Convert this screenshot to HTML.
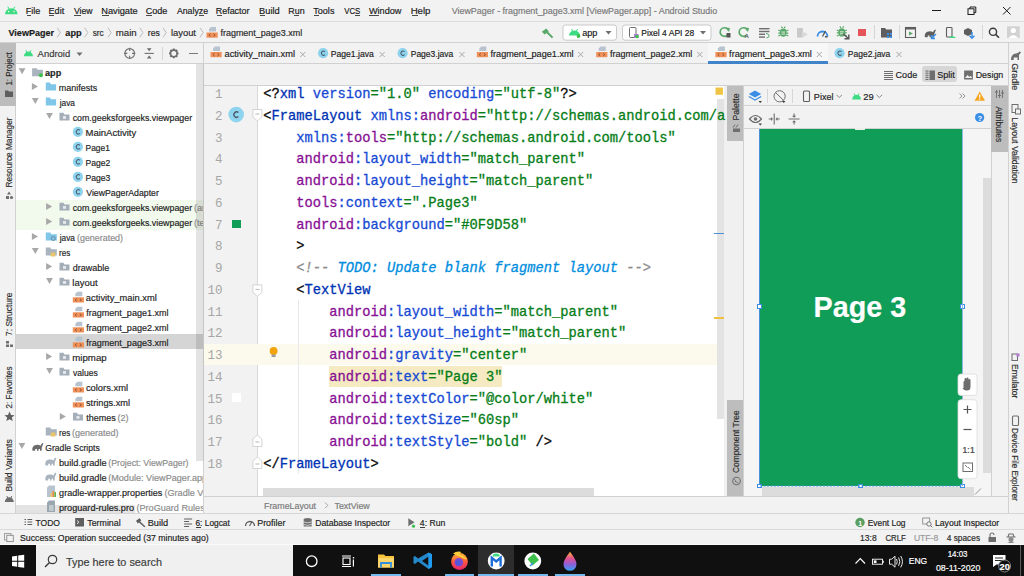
<!DOCTYPE html>
<html><head><meta charset="utf-8">
<style>
*{margin:0;padding:0;box-sizing:border-box}
html,body{width:1024px;height:576px;overflow:hidden;background:#f2f2f2;font-family:"Liberation Sans",sans-serif}
.a{position:absolute}
svg{position:absolute;left:0;top:0}
svg{font-family:"Liberation Sans",sans-serif} svg text{white-space:pre}
</style></head><body>
<div class="a" style="left:0px;top:0px;width:1024px;height:22px;background:#f2f2f2;border-bottom:1px solid #dcdcdc"></div>
<div class="a" style="left:0px;top:22px;width:1024px;height:21px;background:#f2f2f2;border-bottom:1px solid #d1d1d1"></div>
<div class="a" style="left:0px;top:43px;width:16px;height:471px;background:#f2f2f2;border-right:1px solid #d1d1d1"></div>
<div class="a" style="left:0px;top:43px;width:16px;height:63px;background:#bdbdbd;"></div>
<div class="a" style="left:0px;top:399px;width:16px;height:0px;background:#bdbdbd;"></div>
<div class="a" style="left:16px;top:43px;width:187px;height:21px;background:#f2f2f2;border-bottom:1px solid #d1d1d1"></div>
<div class="a" style="left:16px;top:64px;width:187px;height:450px;background:#ffffff;"></div>
<div class="a" style="left:16px;top:199.5px;width:187px;height:30px;background:#f2f9ed;"></div>
<div class="a" style="left:16px;top:334px;width:187px;height:15px;background:#d5d5d5;"></div>
<div class="a" style="left:16px;top:505px;width:119px;height:8px;background:#e3e3e3;"></div>
<div class="a" style="left:203px;top:43px;width:1px;height:471px;background:#d1d1d1;"></div>
<div class="a" style="left:204px;top:43px;width:804px;height:21px;background:#f2f2f2;border-bottom:1px solid #d1d1d1"></div>
<div class="a" style="left:708px;top:43px;width:120px;height:20px;background:#f7f7f7;"></div>
<div class="a" style="left:708px;top:61px;width:120px;height:3px;background:#4083c9;"></div>
<div class="a" style="left:204px;top:64px;width:804px;height:22px;background:#f2f2f2;border-bottom:1px solid #d1d1d1"></div>
<div class="a" style="left:922px;top:66px;width:35px;height:16px;background:#d6d6d6;border-radius:3px"></div>
<div class="a" style="left:204px;top:86px;width:53px;height:410px;background:#f2f2f2;"></div>
<div class="a" style="left:257px;top:86px;width:1px;height:410px;background:#d9d9d9;"></div>
<div class="a" style="left:258px;top:86px;width:468px;height:410px;background:#ffffff;"></div>
<div class="a" style="left:204px;top:343.5px;width:522px;height:21.75px;background:#fcfaed;"></div>
<div class="a" style="left:329px;top:365.5px;width:173px;height:21.25px;background:#f5eac1;"></div>
<div class="a" style="left:717px;top:99px;width:7px;height:320px;background:#e3e3e3;"></div>
<div class="a" style="left:263px;top:488px;width:331px;height:8px;background:#dcdcdc;"></div>
<div class="a" style="left:724px;top:86px;width:19px;height:410px;background:#f0f0f0;"></div>
<div class="a" style="left:727px;top:86px;width:16px;height:55px;background:#bdbdbd;"></div>
<div class="a" style="left:727px;top:400px;width:16px;height:96px;background:#bdbdbd;"></div>
<div class="a" style="left:743px;top:86px;width:1px;height:410px;background:#d1d1d1;"></div>
<div class="a" style="left:744px;top:86px;width:247px;height:410px;background:#f5f5f5;"></div>
<div class="a" style="left:744px;top:86px;width:247px;height:20px;background:#f2f2f2;border-bottom:1px solid #d1d1d1"></div>
<div class="a" style="left:744px;top:107px;width:247px;height:22px;background:#f2f2f2;border-bottom:1px solid #d1d1d1"></div>
<div class="a" style="left:759px;top:129px;width:203.5px;height:357px;background:#0f9d58;"></div>
<div class="a" style="left:983px;top:178px;width:8px;height:295px;background:#dcdcdc;"></div>
<div class="a" style="left:762px;top:487px;width:212px;height:9px;background:#dcdcdc;"></div>
<div class="a" style="left:991px;top:86px;width:17px;height:410px;background:#f2f2f2;border-left:1px solid #d1d1d1"></div>
<div class="a" style="left:991px;top:86px;width:17px;height:66px;background:#bdbdbd;"></div>
<div class="a" style="left:1008px;top:43px;width:16px;height:471px;background:#f2f2f2;border-left:1px solid #d1d1d1"></div>
<div class="a" style="left:204px;top:496px;width:804px;height:18px;background:#f2f2f2;border-top:1px solid #d1d1d1"></div>
<div class="a" style="left:0px;top:513px;width:1024px;height:16px;background:#f2f2f2;border-top:1px solid #d6d6d6"></div>
<div class="a" style="left:0px;top:529px;width:1024px;height:16px;background:#f2f2f2;border-top:1px solid #dadada"></div>
<div class="a" style="left:0px;top:544px;width:1024px;height:1px;background:#fafafa;"></div>
<div class="a" style="left:0px;top:545px;width:1024px;height:31px;background:#101010;"></div>
<div class="a" style="left:36px;top:545px;width:257px;height:31px;background:#f0f0f0;"></div>
<div class="a" style="left:478px;top:545px;width:36px;height:31px;background:#2d2d2d;"></div>
<div class="a" style="left:26.6px;top:14.9px;width:4.899999999999999px;height:0.9px;background:#4a4a4a;"></div>
<div class="a" style="left:49.4px;top:14.9px;width:5.100000000000001px;height:0.9px;background:#4a4a4a;"></div>
<div class="a" style="left:74px;top:14.9px;width:6.5px;height:0.9px;background:#4a4a4a;"></div>
<div class="a" style="left:102.2px;top:14.9px;width:6.799999999999997px;height:0.9px;background:#4a4a4a;"></div>
<div class="a" style="left:146.3px;top:14.9px;width:6.199999999999989px;height:0.9px;background:#4a4a4a;"></div>
<div class="a" style="left:199px;top:14.9px;width:4.5px;height:0.9px;background:#4a4a4a;"></div>
<div class="a" style="left:216.6px;top:14.9px;width:5.400000000000006px;height:0.9px;background:#4a4a4a;"></div>
<div class="a" style="left:259.9px;top:14.9px;width:5.100000000000023px;height:0.9px;background:#4a4a4a;"></div>
<div class="a" style="left:293.5px;top:14.9px;width:5.0px;height:0.9px;background:#4a4a4a;"></div>
<div class="a" style="left:313.6px;top:14.9px;width:5.399999999999977px;height:0.9px;background:#4a4a4a;"></div>
<div class="a" style="left:355px;top:14.9px;width:5px;height:0.9px;background:#4a4a4a;"></div>
<div class="a" style="left:369px;top:14.9px;width:9.5px;height:0.9px;background:#4a4a4a;"></div>
<div class="a" style="left:411.6px;top:14.9px;width:6.399999999999977px;height:0.9px;background:#4a4a4a;"></div>
<div class="a" style="left:932px;top:10px;width:9px;height:1px;background:#1b1b1b;"></div>
<div class="a" style="left:857.5px;top:29px;width:8px;height:7px;background:#e5535b;"></div>
<div class="a" style="left:873.5px;top:25px;width:1px;height:14px;background:#d6d6d6;"></div>
<div class="a" style="left:898.5px;top:25px;width:1px;height:14px;background:#d6d6d6;"></div>
<div class="a" style="left:982px;top:25px;width:1px;height:14px;background:#d6d6d6;"></div>
<div class="a" style="left:161.5px;top:47px;width:1px;height:13px;background:#d6d6d6;"></div>
<div class="a" style="left:188.7px;top:52.6px;width:9.3px;height:1.7px;background:#7a7a7a;"></div>
<div class="a" style="left:883.7px;top:70.5px;width:9.3px;height:1.1px;background:#6e6e6e;"></div>
<div class="a" style="left:883.7px;top:72.55px;width:9.3px;height:1.1px;background:#6e6e6e;"></div>
<div class="a" style="left:883.7px;top:74.6px;width:9.3px;height:1.1px;background:#6e6e6e;"></div>
<div class="a" style="left:883.7px;top:76.65px;width:9.3px;height:1.1px;background:#6e6e6e;"></div>
<div class="a" style="left:883.7px;top:78.7px;width:9.3px;height:1.1px;background:#6e6e6e;"></div>
<div class="a" style="left:232px;top:219.5px;width:8.5px;height:8.5px;background:#0f9d58;"></div>
<div class="a" style="left:232px;top:393px;width:8.5px;height:8.5px;background:#ffffff;"></div>
<div class="a" style="left:297.5px;top:300px;width:1px;height:174px;background:#e8e8e8;"></div>
<div class="a" style="left:714px;top:232.5px;width:10px;height:1.5px;background:#4a90d9;"></div>
<div class="a" style="left:714px;top:317px;width:10px;height:1.5px;background:#f0c040;"></div>
<div class="a" style="left:767.4px;top:89px;width:1px;height:14px;background:#d6d6d6;"></div>
<div class="a" style="left:791.7px;top:89px;width:1px;height:14px;background:#d6d6d6;"></div>
<div class="a" style="left:759px;top:129px;width:1px;height:357px;background:#4a90d9;"></div>
<div class="a" style="left:757px;top:304px;width:4.5px;height:4.5px;background:#ffffff;border:1px solid #3a8ee6"></div>
<div class="a" style="left:960px;top:304px;width:4.5px;height:4.5px;background:#ffffff;border:1px solid #3a8ee6"></div>
<div class="a" style="left:757px;top:483.5px;width:4.5px;height:4.5px;background:#ffffff;border:1px solid #3a8ee6"></div>
<div class="a" style="left:858px;top:483.5px;width:4.5px;height:4.5px;background:#ffffff;border:1px solid #3a8ee6"></div>
<div class="a" style="left:960px;top:483.5px;width:4.5px;height:4.5px;background:#ffffff;border:1px solid #3a8ee6"></div>
<div class="a" style="left:855px;top:128px;width:10px;height:2px;background:#e8f0e8;"></div>
<div class="a" style="left:961.6px;top:129px;width:1px;height:357px;background:#8ab8e0;"></div>
<div class="a" style="left:196px;top:526.8px;width:4.5px;height:0.9px;background:#3a3a3a;"></div>
<div class="a" style="left:420px;top:526.8px;width:4.5px;height:0.9px;background:#3a3a3a;"></div>
<div class="a" style="left:371.25px;top:574px;width:29.75px;height:2px;background:#76b9ed;"></div>
<div class="a" style="left:444.8px;top:574px;width:29.399999999999977px;height:2px;background:#76b9ed;"></div>
<div class="a" style="left:478.4px;top:574px;width:36.0px;height:2px;background:#76b9ed;"></div>
<div class="a" style="left:518.3px;top:574px;width:29.700000000000045px;height:2px;background:#76b9ed;"></div>
<div class="a" style="left:555px;top:574px;width:29.700000000000045px;height:2px;background:#76b9ed;"></div>
<div class="a" style="left:1020px;top:545px;width:1px;height:31px;background:#5a5a5a;"></div>
<svg width="1024" height="576" viewBox="0 0 1024 576">
<path d="M5.00,14.20 A6.30,5.93 0 0 1 17.60,14.20 Z" fill="#3ddc84"/>
<line x1="7.77" y1="6.60" x2="9.16" y2="9.26" stroke="#3ddc84" stroke-width="1"/>
<line x1="14.83" y1="6.60" x2="13.44" y2="9.26" stroke="#3ddc84" stroke-width="1"/>
<circle cx="8.6" cy="11.6" r="0.8" fill="#f2f2f2"/><circle cx="14" cy="11.6" r="0.8" fill="#f2f2f2"/>
<text x="25.68" y="14.4" font-size="9.06" fill="#1b1b1b" font-weight="normal" stroke="#1b1b1b" stroke-width="0.18" textLength="14.60" lengthAdjust="spacingAndGlyphs" >File</text>
<text x="48.47" y="14.4" font-size="9.15" fill="#1b1b1b" font-weight="normal" stroke="#1b1b1b" stroke-width="0.18" textLength="15.76" lengthAdjust="spacingAndGlyphs" >Edit</text>
<text x="73.90" y="14.4" font-size="8.66" fill="#1b1b1b" font-weight="normal" stroke="#1b1b1b" stroke-width="0.18" textLength="18.61" lengthAdjust="spacingAndGlyphs" >View</text>
<text x="101.26" y="14.4" font-size="9.24" fill="#1b1b1b" font-weight="normal" stroke="#1b1b1b" stroke-width="0.18" textLength="36.47" lengthAdjust="spacingAndGlyphs" >Navigate</text>
<text x="145.64" y="14.4" font-size="9.13" fill="#1b1b1b" font-weight="normal" stroke="#1b1b1b" stroke-width="0.18" textLength="21.82" lengthAdjust="spacingAndGlyphs" >Code</text>
<text x="176.90" y="14.4" font-size="8.75" fill="#1b1b1b" font-weight="normal" stroke="#1b1b1b" stroke-width="0.18" textLength="31.12" lengthAdjust="spacingAndGlyphs" >Analyze</text>
<text x="215.68" y="14.4" font-size="8.97" fill="#1b1b1b" font-weight="normal" stroke="#1b1b1b" stroke-width="0.18" textLength="33.90" lengthAdjust="spacingAndGlyphs" >Refactor</text>
<text x="259.06" y="14.4" font-size="9.28" fill="#1b1b1b" font-weight="normal" stroke="#1b1b1b" stroke-width="0.18" textLength="20.63" lengthAdjust="spacingAndGlyphs" >Build</text>
<text x="288.29" y="14.4" font-size="8.88" fill="#1b1b1b" font-weight="normal" stroke="#1b1b1b" stroke-width="0.18" textLength="16.28" lengthAdjust="spacingAndGlyphs" >Run</text>
<text x="313.32" y="14.4" font-size="9.04" fill="#1b1b1b" font-weight="normal" stroke="#1b1b1b" stroke-width="0.18" textLength="21.09" lengthAdjust="spacingAndGlyphs" >Tools</text>
<text x="344.20" y="14.4" font-size="8.20" fill="#1b1b1b" font-weight="normal" stroke="#1b1b1b" stroke-width="0.18" textLength="16.06" lengthAdjust="spacingAndGlyphs" >VCS</text>
<text x="368.90" y="14.4" font-size="9.16" fill="#1b1b1b" font-weight="normal" stroke="#1b1b1b" stroke-width="0.18" textLength="32.57" lengthAdjust="spacingAndGlyphs" >Window</text>
<text x="410.63" y="14.4" font-size="9.64" fill="#1b1b1b" font-weight="normal" stroke="#1b1b1b" stroke-width="0.18" textLength="19.82" lengthAdjust="spacingAndGlyphs" >Help</text>
<text x="451.70" y="14.4" font-size="8.92" fill="#7a7a7a" font-weight="normal" stroke="#7a7a7a" stroke-width="0.18" textLength="265.53" lengthAdjust="spacingAndGlyphs" >ViewPager - fragment_page3.xml [ViewPager.app] - Android Studio</text>
<rect x="968" y="8.8" width="6" height="5.7" fill="none" stroke="#1b1b1b" stroke-width="1"/><path d="M970,8.8 V7 H975.8 V12.6 H974" fill="none" stroke="#1b1b1b" stroke-width="1"/>
<path d="M1003,7 L1010.5,14.5 M1010.5,7 L1003,14.5" stroke="#1b1b1b" stroke-width="1"/>
<text x="8.51" y="35.6" font-size="9.02" fill="#1b1b1b" font-weight="bold" stroke="#1b1b1b" stroke-width="0.18" textLength="45.48" lengthAdjust="spacingAndGlyphs" >ViewPager</text>
<path d="M57.2,27.8 L60.400000000000006,32.55 L57.2,37.3" stroke="#b5b5b5" stroke-width="0.9" fill="none"/>
<text x="65.33" y="35.6" font-size="9.15" fill="#1b1b1b" font-weight="bold" stroke="#1b1b1b" stroke-width="0.18" textLength="16.27" lengthAdjust="spacingAndGlyphs" >app</text>
<path d="M84.6,27.8 L87.8,32.55 L84.6,37.3" stroke="#b5b5b5" stroke-width="0.9" fill="none"/>
<text x="92.75" y="35.6" font-size="8.20" fill="#2b2b2b" font-weight="normal" stroke="#2b2b2b" stroke-width="0.18" textLength="10.92" lengthAdjust="spacingAndGlyphs" >src</text>
<path d="M108,27.8 L111.2,32.55 L108,37.3" stroke="#b5b5b5" stroke-width="0.9" fill="none"/>
<text x="115.72" y="35.6" font-size="9.66" fill="#2b2b2b" font-weight="normal" stroke="#2b2b2b" stroke-width="0.18" textLength="20.93" lengthAdjust="spacingAndGlyphs" >main</text>
<path d="M139.8,27.8 L143.0,32.55 L139.8,37.3" stroke="#b5b5b5" stroke-width="0.9" fill="none"/>
<text x="147.88" y="35.6" font-size="8.69" fill="#2b2b2b" font-weight="normal" stroke="#2b2b2b" stroke-width="0.18" textLength="12.07" lengthAdjust="spacingAndGlyphs" >res</text>
<path d="M163,27.8 L166.2,32.55 L163,37.3" stroke="#b5b5b5" stroke-width="0.9" fill="none"/>
<text x="170.94" y="35.6" font-size="9.38" fill="#2b2b2b" font-weight="normal" stroke="#2b2b2b" stroke-width="0.18" textLength="25.03" lengthAdjust="spacingAndGlyphs" >layout</text>
<path d="M200,27.8 L203.2,32.55 L200,37.3" stroke="#b5b5b5" stroke-width="0.9" fill="none"/>
<path d="M209.0,31.5 L209.0,29 L211.0,27 L216.0,27 L216.0,31.5 Z" fill="#b7c3cf"/>
<rect x="206.5" y="32.5" width="11.2" height="5.2" fill="#f0915a"/>
<path d="M210.5,33.7 l-1.6,1.4 l1.6,1.4 M213.5,33.7 l1.6,1.4 l-1.6,1.4" stroke="#8a4a2a" stroke-width="0.9" fill="none"/>
<text x="220.41" y="35.6" font-size="8.98" fill="#2b2b2b" font-weight="normal" stroke="#2b2b2b" stroke-width="0.18" textLength="81.88" lengthAdjust="spacingAndGlyphs" >fragment_page3.xml</text>
<path d="M541.9,31.8 L546.2,28.6 L548.8,31.2 L544.6,34.4 Z" fill="#59a869"/><path d="M546.8,32 L552.6,37.6" stroke="#59a869" stroke-width="2"/>
<rect x="563" y="25" width="53.5" height="15.2" rx="2.5" fill="#ffffff" stroke="#c9c9c9" stroke-width="1"/>
<path d="M569.00,35.50 A5.50,5.07 0 0 1 580.00,35.50 Z" fill="#3ddc84"/>
<line x1="571.42" y1="29.00" x2="572.63" y2="31.27" stroke="#3ddc84" stroke-width="1"/>
<line x1="577.58" y1="29.00" x2="576.37" y2="31.27" stroke="#3ddc84" stroke-width="1"/>
<circle cx="578.5" cy="36" r="1.9" fill="#3ec14c"/>
<text x="582.14" y="35.6" font-size="9.12" fill="#1b1b1b" font-weight="normal" stroke="#1b1b1b" stroke-width="0.18" textLength="15.21" lengthAdjust="spacingAndGlyphs" >app</text>
<path d="M605.5,31 L611.5,31 L608.5,34.5 Z" fill="#6e6e6e"/>
<rect x="622.5" y="25" width="88.5" height="15.2" rx="2.5" fill="#ffffff" stroke="#c9c9c9" stroke-width="1"/>
<rect x="629.5" y="27.5" width="6.5" height="10" rx="1" fill="none" stroke="#6e6e6e" stroke-width="1"/>
<rect x="634" y="34" width="4.5" height="4" fill="#b07ad6"/><circle cx="637" cy="36.5" r="1.8" fill="#3ec14c"/>
<text x="641.22" y="35.6" font-size="8.52" fill="#1b1b1b" font-weight="normal" stroke="#1b1b1b" stroke-width="0.18" textLength="53.07" lengthAdjust="spacingAndGlyphs" >Pixel 4 API 28</text>
<path d="M700,31 L706,31 L703,34.5 Z" fill="#6e6e6e"/>
<path d="M728.5,30.5 A4.3,4.3 0 1 0 727.0,35.5" stroke="#59a869" stroke-width="1.6" fill="none"/><path d="M725.5,27.5 L730.0,28.0 L729.0,32.0 Z" fill="#59a869"/>
<rect x="726.5" y="33" width="4" height="4.5" fill="#555"/>
<path d="M747.5,30.5 A4.3,4.3 0 1 0 746.0,35.5" stroke="#59a869" stroke-width="1.6" fill="none"/><path d="M744.5,27.5 L749.0,28.0 L748.0,32.0 Z" fill="#59a869"/>
<text x="744.5" y="37.5" font-size="6" fill="#555" font-weight="bold">A</text>
<rect x="759" y="28" width="10.5" height="1.4" fill="#6e6e6e"/><rect x="759" y="30.8" width="10.5" height="1.4" fill="#6e6e6e"/><rect x="759" y="33.6" width="6" height="1.4" fill="#6e6e6e"/><rect x="759" y="36.4" width="6" height="1.4" fill="#6e6e6e"/><path d="M766,33.5 q3,0 3,2.3 q0,2 -2.5,2" stroke="#59a869" stroke-width="1" fill="none"/>
<ellipse cx="783.3" cy="32.6" rx="3.4" ry="4.2" fill="#59a869"/><path d="M778.3,30.1 l2,1 M788.3,30.1 l-2,1 M778.3,33.1 h2 M788.3,33.1 h-2 M778.3,36.1 l2,-1 M788.3,36.1 l-2,-1 M781.3,26.6 l1.2,1.5 M785.3,26.6 l-1.2,1.5" stroke="#59a869" stroke-width="1.1"/><rect x="781.5" y="31.6" width="3.6" height="0.9" fill="#f2f2f2"/><rect x="781.5" y="33.6" width="3.6" height="0.9" fill="#f2f2f2"/>
<path d="M797,28 L803,28 L803,37.5 L797,37.5 Z" fill="#c9c9c9"/><path d="M802,31 L808,34.5 L802,38 Z" fill="#dadada"/>
<path d="M817.5,36.5 A5,5 0 0 1 827.5,36.5" stroke="#3a8ee6" stroke-width="1.8" fill="none"/><path d="M822.5,36.5 L825.5,31" stroke="#555" stroke-width="1.3"/><path d="M825,36.5 A2.6,2.6 0 0 0 827.5,36.5" stroke="#555" stroke-width="1.5" fill="none"/>
<ellipse cx="841.8" cy="32.4" rx="3.4" ry="4.2" fill="#59a869"/><path d="M836.8,29.9 l2,1 M846.8,29.9 l-2,1 M836.8,32.9 h2 M846.8,32.9 h-2 M836.8,35.9 l2,-1 M846.8,35.9 l-2,-1 M839.8,26.4 l1.2,1.5 M843.8,26.4 l-1.2,1.5" stroke="#59a869" stroke-width="1.1"/><rect x="840.0" y="31.4" width="3.6" height="0.9" fill="#f2f2f2"/><rect x="840.0" y="33.4" width="3.6" height="0.9" fill="#f2f2f2"/>
<path d="M843,33.8 L848.5,38.5 M844.5,38.8 H848.8 V34.5" stroke="#555" stroke-width="1.4" fill="none"/>
<path d="M881,37.5 V28 H885 L886.3,29.5 H892 V37.5 Z" fill="#5e5e5e"/><rect x="887" y="33" width="2" height="2" fill="#3a8ee6"/><rect x="890" y="33" width="2" height="2" fill="#3a8ee6"/><rect x="887" y="36" width="2" height="2" fill="#3a8ee6"/><rect x="890" y="36" width="2" height="2" fill="#3a8ee6"/>
<rect x="905.5" y="27.5" width="10" height="10" fill="none" stroke="#5e5e5e" stroke-width="1.1"/><rect x="905.5" y="27.5" width="10" height="2" fill="#5e5e5e"/><path d="M909,31.5 L913,33.5 L909,35.5 Z" fill="#59a869"/>
<path transform="translate(924.5,29)" d="M0.3,8 Q-0.2,3 4,2.4 Q7,2 8.4,3.2 Q9.3,1.8 9.8,0.9 Q10.9,0 11.3,1.1 Q10.8,2.6 9.9,4.6 L9.6,8.2 H8 V6.6 H6.6 V8.2 H5 V6.6 H3.2 V8.2 H1.6 Z" fill="#5e5e5e"/>
<path d="M931.5,38.5 L936,34 M931.5,35 V38.5 H935" stroke="#3a8ee6" stroke-width="1.4" fill="none"/>
<rect x="946.5" y="27.5" width="5.5" height="9.5" rx="0.8" fill="none" stroke="#5e5e5e" stroke-width="1.1"/><path d="M949,38 A4,3.5 0 0 1 956,38 Z" fill="#3ddc84"/>
<path d="M964,30 L968,28 L972,30 L972,34 L968,36 L964,34 Z" fill="#5e5e5e"/><path d="M972,32 V38 M969.5,35.8 L972,38.3 L974.5,35.8" stroke="#3a8ee6" stroke-width="1.4" fill="none"/>
<circle cx="993" cy="31.8" r="3.6" stroke="#3a3a3a" stroke-width="1.4" fill="none"/><path d="M995.6,34.4 L999,37.8" stroke="#3a3a3a" stroke-width="1.6"/>
<rect x="1007" y="26.3" width="12.7" height="11.7" fill="#d2d2d2"/><circle cx="1013.3" cy="30.5" r="2.6" fill="#fff"/><path d="M1008.5,38 q4.8,-6 9.7,0 Z" fill="#fff"/>
<path d="M23.90,56.30 A4.50,4.76 0 0 1 32.90,56.30 Z" fill="#3ddc84"/>
<line x1="25.88" y1="50.20" x2="26.87" y2="52.34" stroke="#3ddc84" stroke-width="1"/>
<line x1="30.92" y1="50.20" x2="29.93" y2="52.34" stroke="#3ddc84" stroke-width="1"/>
<text x="37.60" y="56.9" font-size="9.47" fill="#3a3a3a" font-weight="normal" stroke="#3a3a3a" stroke-width="0.18" textLength="32.63" lengthAdjust="spacingAndGlyphs" >Android</text>
<path d="M76.5,52.4 L82.5,52.4 L79.5,56 Z" fill="#6e6e6e"/>
<circle cx="129.7" cy="53.4" r="4.8" stroke="#6e6e6e" stroke-width="1.1" fill="none"/><path d="M129.7,47.8 v3.2 M129.7,55.8 v3.2 M124.1,53.4 h3.2 M132.1,53.4 h3.2" stroke="#6e6e6e" stroke-width="1.1"/>
<path d="M144.6,53.4 h9.2" stroke="#6e6e6e" stroke-width="1.1"/><path d="M146.8,48.3 L151.6,48.3 L149.2,51.2 Z M146.8,58.5 L151.6,58.5 L149.2,55.6 Z" fill="#6e6e6e"/>
<circle cx="173.8" cy="53.4" r="3.3" stroke="#6e6e6e" stroke-width="1.6" fill="none"/><path d="M173.8,48.6 v2 M173.8,56.2 v2 M169,53.4 h2 M176.6,53.4 h2 M170.4,50 l1.4,1.4 M175.8,55.4 l1.4,1.4 M177.2,50 l-1.4,1.4 M171.8,55.4 l-1.4,1.4" stroke="#6e6e6e" stroke-width="1.9"/>
<defs><clipPath id="treeclip"><rect x="16" y="64" width="187" height="449"/></clipPath></defs>
<g clip-path="url(#treeclip)">
<path d="M18.7,68.3 L25.5,68.3 L22.10,74.2 Z" fill="#a8a8a8"/>
<path d="M32.1,76.2 V68.3 H36.5 L37.8,69.8 H42.9 V76.2 Z" fill="#a9b4be"/><circle cx="40.9" cy="75.2" r="2" fill="#3ec14c"/>
<text x="45.03" y="76.0" font-size="9.12" fill="#1f1f1f" font-weight="bold" stroke="#1f1f1f" stroke-width="0.18" textLength="16.22" lengthAdjust="spacingAndGlyphs" >app</text>
<path d="M31.900000000000002,83.0 L38.0,86.50 L31.900000000000002,90.0 Z" fill="#a8a8a8"/>
<path d="M45.8,90.5 L45.8,82.5 L49.92,82.5 L50.95,84.26 L56.099999999999994,84.26 L56.099999999999994,90.5 Z" fill="#7fc6e8"/>
<text x="58.87" y="91.0" font-size="8.97" fill="#1f1f1f" font-weight="normal" stroke="#1f1f1f" stroke-width="0.18" textLength="38.39" lengthAdjust="spacingAndGlyphs" >manifests</text>
<path d="M31.900000000000002,98.1 L38.7,98.1 L35.30,104.0 Z" fill="#a8a8a8"/>
<path d="M45.8,105.5 L45.8,97.5 L49.92,97.5 L50.95,99.26 L56.099999999999994,99.26 L56.099999999999994,105.5 Z" fill="#7fc6e8"/>
<text x="59.75" y="106.0" font-size="8.29" fill="#1f1f1f" font-weight="normal" stroke="#1f1f1f" stroke-width="0.18" textLength="15.20" lengthAdjust="spacingAndGlyphs" >java</text>
<path d="M46.099999999999994,113.1 L52.89999999999999,113.1 L49.50,119.0 Z" fill="#a8a8a8"/>
<path d="M59.5,120.6 L59.5,112.8 L63.50,112.8 L64.50,114.52 L69.5,114.52 L69.5,120.6 Z" fill="#a3aeb8"/>
<rect x="63.00" y="116.08" width="3.00" height="2.73" fill="#ffffff" opacity="0.75"/>
<text x="72.65" y="121.0" font-size="8.85" fill="#1f1f1f" font-weight="normal" stroke="#1f1f1f" stroke-width="0.18" textLength="119.49" lengthAdjust="spacingAndGlyphs" >com.geeksforgeeks.viewpager</text>
<circle cx="77.89999999999999" cy="131.8" r="5.1" fill="#8dd3ee"/>
<path d="M79.84,130.27 A2.14,2.14 0 1 0 79.84,133.33" stroke="#4a5868" stroke-width="1.02" fill="none"/>
<text x="85.49" y="136.0" font-size="9.52" fill="#1f1f1f" font-weight="normal" stroke="#1f1f1f" stroke-width="0.18" textLength="50.80" lengthAdjust="spacingAndGlyphs" >MainActivity</text>
<circle cx="77.89999999999999" cy="146.8" r="5.1" fill="#8dd3ee"/>
<path d="M79.84,145.27 A2.14,2.14 0 1 0 79.84,148.33" stroke="#4a5868" stroke-width="1.02" fill="none"/>
<text x="85.58" y="151.0" font-size="8.39" fill="#1f1f1f" font-weight="normal" stroke="#1f1f1f" stroke-width="0.18" textLength="24.27" lengthAdjust="spacingAndGlyphs" >Page1</text>
<circle cx="77.89999999999999" cy="161.8" r="5.1" fill="#8dd3ee"/>
<path d="M79.84,160.27 A2.14,2.14 0 1 0 79.84,163.33" stroke="#4a5868" stroke-width="1.02" fill="none"/>
<text x="85.56" y="166.0" font-size="8.57" fill="#1f1f1f" font-weight="normal" stroke="#1f1f1f" stroke-width="0.18" textLength="24.79" lengthAdjust="spacingAndGlyphs" >Page2</text>
<circle cx="77.89999999999999" cy="176.8" r="5.1" fill="#8dd3ee"/>
<path d="M79.84,175.27 A2.14,2.14 0 1 0 79.84,178.33" stroke="#4a5868" stroke-width="1.02" fill="none"/>
<text x="85.56" y="181.0" font-size="8.57" fill="#1f1f1f" font-weight="normal" stroke="#1f1f1f" stroke-width="0.18" textLength="24.79" lengthAdjust="spacingAndGlyphs" >Page3</text>
<circle cx="77.89999999999999" cy="191.8" r="5.1" fill="#8dd3ee"/>
<path d="M79.84,190.27 A2.14,2.14 0 1 0 79.84,193.33" stroke="#4a5868" stroke-width="1.02" fill="none"/>
<text x="86.25" y="196.0" font-size="8.72" fill="#1f1f1f" font-weight="normal" stroke="#1f1f1f" stroke-width="0.18" textLength="72.59" lengthAdjust="spacingAndGlyphs" >ViewPagerAdapter</text>
<path d="M46.099999999999994,203.0 L52.199999999999996,206.50 L46.099999999999994,210.0 Z" fill="#a8a8a8"/>
<path d="M59.5,210.60000000000002 L59.5,202.8 L63.50,202.8 L64.50,204.52 L69.5,204.52 L69.5,210.60000000000002 Z" fill="#a3aeb8"/>
<rect x="63.00" y="206.08" width="3.00" height="2.73" fill="#ffffff" opacity="0.75"/>
<text x="72.65" y="211.0" font-size="8.85" fill="#1f1f1f" font-weight="normal" stroke="#1f1f1f" stroke-width="0.18" textLength="119.49" lengthAdjust="spacingAndGlyphs" >com.geeksforgeeks.viewpager</text>
<text x="193.95" y="211.0" font-size="9.10" fill="#8c8c8c" font-weight="normal" stroke="#8c8c8c" stroke-width="0.18" textLength="53.10" lengthAdjust="spacingAndGlyphs" >(androidTest)</text>
<path d="M46.099999999999994,218.0 L52.199999999999996,221.50 L46.099999999999994,225.0 Z" fill="#a8a8a8"/>
<path d="M59.5,225.60000000000002 L59.5,217.8 L63.50,217.8 L64.50,219.52 L69.5,219.52 L69.5,225.60000000000002 Z" fill="#a3aeb8"/>
<rect x="63.00" y="221.08" width="3.00" height="2.73" fill="#ffffff" opacity="0.75"/>
<text x="72.65" y="226.0" font-size="8.85" fill="#1f1f1f" font-weight="normal" stroke="#1f1f1f" stroke-width="0.18" textLength="119.49" lengthAdjust="spacingAndGlyphs" >com.geeksforgeeks.viewpager</text>
<text x="193.95" y="226.0" font-size="9.10" fill="#8c8c8c" font-weight="normal" stroke="#8c8c8c" stroke-width="0.18" textLength="20.73" lengthAdjust="spacingAndGlyphs" >(test)</text>
<path d="M31.900000000000002,233.0 L38.0,236.50 L31.900000000000002,240.0 Z" fill="#a8a8a8"/>
<path d="M45.8,240.5 L45.8,232.5 L50.20,232.5 L51.30,234.26 L56.8,234.26 L56.8,240.5 Z" fill="#7fc6e8"/>
<circle cx="53.3" cy="238.5" r="2" fill="none" stroke="#6a8aa0" stroke-width="1"/>
<text x="59.75" y="241.0" font-size="8.29" fill="#1f1f1f" font-weight="normal" stroke="#1f1f1f" stroke-width="0.18" textLength="15.20" lengthAdjust="spacingAndGlyphs" >java</text>
<text x="76.97" y="241.0" font-size="8.91" fill="#8c8c8c" font-weight="normal" stroke="#8c8c8c" stroke-width="0.18" textLength="46.06" lengthAdjust="spacingAndGlyphs" >(generated)</text>
<path d="M31.900000000000002,248.1 L38.7,248.1 L35.30,254.0 Z" fill="#a8a8a8"/>
<path d="M45.8,255.5 L45.8,247.5 L50.20,247.5 L51.30,249.26 L56.8,249.26 L56.8,255.5 Z" fill="#a9b4be"/>
<rect x="50.8" y="252.5" width="4.5" height="4" fill="#e8c46a"/>
<text x="59.02" y="256.0" font-size="8.20" fill="#1f1f1f" font-weight="normal" stroke="#1f1f1f" stroke-width="0.18" textLength="11.22" lengthAdjust="spacingAndGlyphs" >res</text>
<path d="M46.099999999999994,263.0 L52.199999999999996,266.50 L46.099999999999994,270.0 Z" fill="#a8a8a8"/>
<path d="M59.5,270.6 L59.5,262.8 L63.50,262.8 L64.50,264.52 L69.5,264.52 L69.5,270.6 Z" fill="#a3aeb8"/>
<rect x="63.00" y="266.08" width="3.00" height="2.73" fill="#ffffff" opacity="0.75"/>
<text x="72.64" y="271.0" font-size="9.01" fill="#1f1f1f" font-weight="normal" stroke="#1f1f1f" stroke-width="0.18" textLength="36.54" lengthAdjust="spacingAndGlyphs" >drawable</text>
<path d="M46.099999999999994,278.1 L52.89999999999999,278.1 L49.50,284.0 Z" fill="#a8a8a8"/>
<path d="M59.5,285.6 L59.5,277.8 L63.50,277.8 L64.50,279.52 L69.5,279.52 L69.5,285.6 Z" fill="#a3aeb8"/>
<rect x="63.00" y="281.08" width="3.00" height="2.73" fill="#ffffff" opacity="0.75"/>
<text x="72.34" y="286.0" font-size="9.46" fill="#1f1f1f" font-weight="normal" stroke="#1f1f1f" stroke-width="0.18" textLength="25.24" lengthAdjust="spacingAndGlyphs" >layout</text>
<path d="M75.3,296.3 L75.3,293.8 L77.3,291.8 L82.3,291.8 L82.3,296.3 Z" fill="#b7c3cf"/>
<rect x="72.8" y="297.3" width="11.2" height="5.2" fill="#f0915a"/>
<path d="M76.8,298.5 l-1.6,1.4 l1.6,1.4 M79.8,298.5 l1.6,1.4 l-1.6,1.4" stroke="#8a4a2a" stroke-width="0.9" fill="none"/>
<text x="85.88" y="301.0" font-size="9.32" fill="#1f1f1f" font-weight="normal" stroke="#1f1f1f" stroke-width="0.18" textLength="70.96" lengthAdjust="spacingAndGlyphs" >activity_main.xml</text>
<path d="M75.3,311.3 L75.3,308.8 L77.3,306.8 L82.3,306.8 L82.3,311.3 Z" fill="#b7c3cf"/>
<rect x="72.8" y="312.3" width="11.2" height="5.2" fill="#f0915a"/>
<path d="M76.8,313.5 l-1.6,1.4 l1.6,1.4 M79.8,313.5 l1.6,1.4 l-1.6,1.4" stroke="#8a4a2a" stroke-width="0.9" fill="none"/>
<text x="86.16" y="316.0" font-size="9.04" fill="#1f1f1f" font-weight="normal" stroke="#1f1f1f" stroke-width="0.18" textLength="82.43" lengthAdjust="spacingAndGlyphs" >fragment_page1.xml</text>
<path d="M75.3,326.3 L75.3,323.8 L77.3,321.8 L82.3,321.8 L82.3,326.3 Z" fill="#b7c3cf"/>
<rect x="72.8" y="327.3" width="11.2" height="5.2" fill="#f0915a"/>
<path d="M76.8,328.5 l-1.6,1.4 l1.6,1.4 M79.8,328.5 l1.6,1.4 l-1.6,1.4" stroke="#8a4a2a" stroke-width="0.9" fill="none"/>
<text x="86.16" y="331.0" font-size="9.04" fill="#1f1f1f" font-weight="normal" stroke="#1f1f1f" stroke-width="0.18" textLength="82.43" lengthAdjust="spacingAndGlyphs" >fragment_page2.xml</text>
<path d="M75.3,341.3 L75.3,338.8 L77.3,336.8 L82.3,336.8 L82.3,341.3 Z" fill="#b7c3cf"/>
<rect x="72.8" y="342.3" width="11.2" height="5.2" fill="#f0915a"/>
<path d="M76.8,343.5 l-1.6,1.4 l1.6,1.4 M79.8,343.5 l1.6,1.4 l-1.6,1.4" stroke="#8a4a2a" stroke-width="0.9" fill="none"/>
<text x="86.16" y="346.0" font-size="9.04" fill="#1f1f1f" font-weight="normal" stroke="#1f1f1f" stroke-width="0.18" textLength="82.43" lengthAdjust="spacingAndGlyphs" >fragment_page3.xml</text>
<path d="M46.099999999999994,353.0 L52.199999999999996,356.50 L46.099999999999994,360.0 Z" fill="#a8a8a8"/>
<path d="M59.5,360.6 L59.5,352.8 L63.50,352.8 L64.50,354.52 L69.5,354.52 L69.5,360.6 Z" fill="#a3aeb8"/>
<rect x="63.00" y="356.08" width="3.00" height="2.73" fill="#ffffff" opacity="0.75"/>
<text x="72.33" y="361.0" font-size="9.64" fill="#1f1f1f" font-weight="normal" stroke="#1f1f1f" stroke-width="0.18" textLength="34.28" lengthAdjust="spacingAndGlyphs" >mipmap</text>
<path d="M46.099999999999994,368.1 L52.89999999999999,368.1 L49.50,374.0 Z" fill="#a8a8a8"/>
<path d="M59.5,375.6 L59.5,367.8 L63.50,367.8 L64.50,369.52 L69.5,369.52 L69.5,375.6 Z" fill="#a3aeb8"/>
<rect x="63.00" y="371.08" width="3.00" height="2.73" fill="#ffffff" opacity="0.75"/>
<text x="73.00" y="376.0" font-size="8.57" fill="#1f1f1f" font-weight="normal" stroke="#1f1f1f" stroke-width="0.18" textLength="24.76" lengthAdjust="spacingAndGlyphs" >values</text>
<path d="M75.3,386.3 L75.3,383.8 L77.3,381.8 L82.3,381.8 L82.3,386.3 Z" fill="#b7c3cf"/>
<rect x="72.8" y="387.3" width="11.2" height="5.2" fill="#f0915a"/>
<path d="M76.8,388.5 l-1.6,1.4 l1.6,1.4 M79.8,388.5 l1.6,1.4 l-1.6,1.4" stroke="#8a4a2a" stroke-width="0.9" fill="none"/>
<text x="85.88" y="391.0" font-size="9.38" fill="#1f1f1f" font-weight="normal" stroke="#1f1f1f" stroke-width="0.18" textLength="42.19" lengthAdjust="spacingAndGlyphs" >colors.xml</text>
<path d="M75.3,401.3 L75.3,398.8 L77.3,396.8 L82.3,396.8 L82.3,401.3 Z" fill="#b7c3cf"/>
<rect x="72.8" y="402.3" width="11.2" height="5.2" fill="#f0915a"/>
<path d="M76.8,403.5 l-1.6,1.4 l1.6,1.4 M79.8,403.5 l1.6,1.4 l-1.6,1.4" stroke="#8a4a2a" stroke-width="0.9" fill="none"/>
<text x="85.97" y="406.0" font-size="9.22" fill="#1f1f1f" font-weight="normal" stroke="#1f1f1f" stroke-width="0.18" textLength="44.06" lengthAdjust="spacingAndGlyphs" >strings.xml</text>
<path d="M59.8,413.0 L65.89999999999999,416.50 L59.8,420.0 Z" fill="#a8a8a8"/>
<path d="M73,420.6 L73,412.8 L77.00,412.8 L78.00,414.52 L83,414.52 L83,420.6 Z" fill="#a3aeb8"/>
<rect x="76.50" y="416.08" width="3.00" height="2.73" fill="#ffffff" opacity="0.75"/>
<text x="86.16" y="421.0" font-size="9.03" fill="#1f1f1f" font-weight="normal" stroke="#1f1f1f" stroke-width="0.18" textLength="29.60" lengthAdjust="spacingAndGlyphs" >themes</text>
<text x="117.45" y="421.0" font-size="9.09" fill="#8c8c8c" font-weight="normal" stroke="#8c8c8c" stroke-width="0.18" textLength="11.11" lengthAdjust="spacingAndGlyphs" >(2)</text>
<path d="M45.8,435.5 L45.8,427.5 L50.20,427.5 L51.30,429.26 L56.8,429.26 L56.8,435.5 Z" fill="#a9b4be"/>
<rect x="50.8" y="432.5" width="4.5" height="4" fill="#e8c46a"/>
<text x="59.02" y="436.0" font-size="8.20" fill="#1f1f1f" font-weight="normal" stroke="#1f1f1f" stroke-width="0.18" textLength="11.22" lengthAdjust="spacingAndGlyphs" >res</text>
<text x="71.96" y="436.0" font-size="9.01" fill="#8c8c8c" font-weight="normal" stroke="#8c8c8c" stroke-width="0.18" textLength="46.58" lengthAdjust="spacingAndGlyphs" >(generated)</text>
<path d="M18.5,443.1 L25.3,443.1 L21.90,449.0 Z" fill="#a8a8a8"/>
<path transform="translate(32,442.5)" d="M0.3,8 Q-0.2,3 4,2.4 Q7,2 8.4,3.2 Q9.3,1.8 9.8,0.9 Q10.9,0 11.3,1.1 Q10.8,2.6 9.9,4.6 L9.6,8.2 H8 V6.6 H6.6 V8.2 H5 V6.6 H3.2 V8.2 H1.6 Z" fill="#6b6b6b"/>
<text x="45.32" y="451.0" font-size="8.59" fill="#1f1f1f" font-weight="normal" stroke="#1f1f1f" stroke-width="0.18" textLength="54.40" lengthAdjust="spacingAndGlyphs" >Gradle Scripts</text>
<path transform="translate(45,457.2)" d="M0.3,8 Q-0.2,3 4,2.4 Q7,2 8.4,3.2 Q9.3,1.8 9.8,0.9 Q10.9,0 11.3,1.1 Q10.8,2.6 9.9,4.6 L9.6,8.2 H8 V6.6 H6.6 V8.2 H5 V6.6 H3.2 V8.2 H1.6 Z" fill="#a9b4be"/>
<text x="58.95" y="466.0" font-size="9.24" fill="#1f1f1f" font-weight="normal" stroke="#1f1f1f" stroke-width="0.18" textLength="47.77" lengthAdjust="spacingAndGlyphs" >build.gradle</text>
<text x="108.22" y="466.0" font-size="8.78" fill="#8c8c8c" font-weight="normal" stroke="#8c8c8c" stroke-width="0.18" textLength="80.32" lengthAdjust="spacingAndGlyphs" >(Project: ViewPager)</text>
<path transform="translate(45,472.2)" d="M0.3,8 Q-0.2,3 4,2.4 Q7,2 8.4,3.2 Q9.3,1.8 9.8,0.9 Q10.9,0 11.3,1.1 Q10.8,2.6 9.9,4.6 L9.6,8.2 H8 V6.6 H6.6 V8.2 H5 V6.6 H3.2 V8.2 H1.6 Z" fill="#a9b4be"/>
<text x="58.95" y="481.0" font-size="9.24" fill="#1f1f1f" font-weight="normal" stroke="#1f1f1f" stroke-width="0.18" textLength="47.77" lengthAdjust="spacingAndGlyphs" >build.gradle</text>
<text x="108.20" y="481.0" font-size="9.10" fill="#8c8c8c" font-weight="normal" stroke="#8c8c8c" stroke-width="0.18" textLength="102.01" lengthAdjust="spacingAndGlyphs" >(Module: ViewPager.app)</text>
<path d="M47,497 V487.5 L49,485.5 H55 V497 Z" fill="#b7c3cf"/><rect x="50.5" y="493" width="1.5" height="4" fill="#e8c46a"/><rect x="52.5" y="491" width="1.5" height="6" fill="#f08a3c"/><rect x="54.5" y="492" width="1.5" height="5" fill="#62b543"/>
<text x="59.14" y="496.0" font-size="9.05" fill="#1f1f1f" font-weight="normal" stroke="#1f1f1f" stroke-width="0.18" textLength="103.17" lengthAdjust="spacingAndGlyphs" >gradle-wrapper.properties</text>
<text x="164.45" y="496.0" font-size="9.10" fill="#8c8c8c" font-weight="normal" stroke="#8c8c8c" stroke-width="0.18" textLength="66.25" lengthAdjust="spacingAndGlyphs" >(Gradle Version)</text>
<path d="M47,512 V502.5 L49,500.5 H55 V512 Z" fill="#9aa7b0"/><path d="M49,506 h4.5 M49,508 h4.5 M49,510 h4.5" stroke="#fff" stroke-width="0.8"/>
<text x="58.95" y="511.0" font-size="9.13" fill="#1f1f1f" font-weight="normal" stroke="#1f1f1f" stroke-width="0.18" textLength="75.12" lengthAdjust="spacingAndGlyphs" >proguard-rules.pro</text>
<text x="136.45" y="511.0" font-size="9.10" fill="#8c8c8c" font-weight="normal" stroke="#8c8c8c" stroke-width="0.18" textLength="148.03" lengthAdjust="spacingAndGlyphs" >(ProGuard Rules for ViewPager.app)</text>
</g>
<rect x="196" y="64" width="7.5" height="397" fill="#000" fill-opacity="0.11"/>
<path d="M213.0,51.0 L213.0,48.5 L215.0,46.5 L220.0,46.5 L220.0,51.0 Z" fill="#b7c3cf"/>
<rect x="210.5" y="52.0" width="11.2" height="5.2" fill="#f0915a"/>
<path d="M214.5,53.2 l-1.6,1.4 l1.6,1.4 M217.5,53.2 l1.6,1.4 l-1.6,1.4" stroke="#8a4a2a" stroke-width="0.9" fill="none"/>
<text x="224.53" y="57" font-size="9.25" fill="#1f1f1f" font-weight="normal" stroke="#1f1f1f" stroke-width="0.18" textLength="70.45" lengthAdjust="spacingAndGlyphs" >activity_main.xml</text>
<path d="M300.3,52 l5,5 M305.3,52 l-5,5" stroke="#a8a8a8" stroke-width="1"/>
<circle cx="323.1" cy="53.2" r="5.1" fill="#8dd3ee"/>
<path d="M325.04,51.67 A2.14,2.14 0 1 0 325.04,54.73" stroke="#4a5868" stroke-width="1.02" fill="none"/>
<text x="330.81" y="57" font-size="8.60" fill="#1f1f1f" font-weight="normal" stroke="#1f1f1f" stroke-width="0.18" textLength="43.03" lengthAdjust="spacingAndGlyphs" >Page1.java</text>
<path d="M379.7,52 l5,5 M384.7,52 l-5,5" stroke="#a8a8a8" stroke-width="1"/>
<circle cx="402.6" cy="53.2" r="5.1" fill="#8dd3ee"/>
<path d="M404.54,51.67 A2.14,2.14 0 1 0 404.54,54.73" stroke="#4a5868" stroke-width="1.02" fill="none"/>
<text x="410.72" y="57" font-size="8.50" fill="#1f1f1f" font-weight="normal" stroke="#1f1f1f" stroke-width="0.18" textLength="42.53" lengthAdjust="spacingAndGlyphs" >Page3.java</text>
<path d="M459.5,52 l5,5 M464.5,52 l-5,5" stroke="#a8a8a8" stroke-width="1"/>
<path d="M479.3,51.0 L479.3,48.5 L481.3,46.5 L486.3,46.5 L486.3,51.0 Z" fill="#b7c3cf"/>
<rect x="476.8" y="52.0" width="11.2" height="5.2" fill="#f0915a"/>
<path d="M480.8,53.2 l-1.6,1.4 l1.6,1.4 M483.8,53.2 l1.6,1.4 l-1.6,1.4" stroke="#8a4a2a" stroke-width="0.9" fill="none"/>
<text x="490.51" y="57" font-size="9.12" fill="#1f1f1f" font-weight="normal" stroke="#1f1f1f" stroke-width="0.18" textLength="83.09" lengthAdjust="spacingAndGlyphs" >fragment_page1.xml</text>
<path d="M578.2,52 l5,5 M583.2,52 l-5,5" stroke="#a8a8a8" stroke-width="1"/>
<path d="M598.7,51.0 L598.7,48.5 L600.7,46.5 L605.7,46.5 L605.7,51.0 Z" fill="#b7c3cf"/>
<rect x="596.2" y="52.0" width="11.2" height="5.2" fill="#f0915a"/>
<path d="M600.2,53.2 l-1.6,1.4 l1.6,1.4 M603.2,53.2 l1.6,1.4 l-1.6,1.4" stroke="#8a4a2a" stroke-width="0.9" fill="none"/>
<text x="609.91" y="57" font-size="9.03" fill="#1f1f1f" font-weight="normal" stroke="#1f1f1f" stroke-width="0.18" textLength="82.28" lengthAdjust="spacingAndGlyphs" >fragment_page2.xml</text>
<path d="M697.3,52 l5,5 M702.3,52 l-5,5" stroke="#a8a8a8" stroke-width="1"/>
<path d="M717.9,51.0 L717.9,48.5 L719.9,46.5 L724.9,46.5 L724.9,51.0 Z" fill="#b7c3cf"/>
<rect x="715.4" y="52.0" width="11.2" height="5.2" fill="#f0915a"/>
<path d="M719.4,53.2 l-1.6,1.4 l1.6,1.4 M722.4,53.2 l1.6,1.4 l-1.6,1.4" stroke="#8a4a2a" stroke-width="0.9" fill="none"/>
<text x="729.11" y="57" font-size="9.07" fill="#1f1f1f" font-weight="normal" stroke="#1f1f1f" stroke-width="0.18" textLength="82.68" lengthAdjust="spacingAndGlyphs" >fragment_page3.xml</text>
<path d="M816.8,52 l5,5 M821.8,52 l-5,5" stroke="#a8a8a8" stroke-width="1"/>
<circle cx="839.6" cy="53.2" r="5.1" fill="#8dd3ee"/>
<path d="M841.54,51.67 A2.14,2.14 0 1 0 841.54,54.73" stroke="#4a5868" stroke-width="1.02" fill="none"/>
<text x="847.82" y="57" font-size="8.50" fill="#1f1f1f" font-weight="normal" stroke="#1f1f1f" stroke-width="0.18" textLength="42.53" lengthAdjust="spacingAndGlyphs" >Page2.java</text>
<path d="M896.5,52 l5,5 M901.5,52 l-5,5" stroke="#a8a8a8" stroke-width="1"/>
<text x="895.55" y="77.7" font-size="9.08" fill="#1f1f1f" font-weight="normal" stroke="#1f1f1f" stroke-width="0.18" textLength="21.71" lengthAdjust="spacingAndGlyphs" >Code</text>
<rect x="925.5" y="70.5" width="3" height="1.1" fill="#6e6e6e"/><rect x="925.5" y="72.6" width="3" height="1.1" fill="#6e6e6e"/><rect x="925.5" y="74.7" width="3" height="1.1" fill="#6e6e6e"/><rect x="925.5" y="76.8" width="3" height="1.1" fill="#6e6e6e"/><rect x="925.5" y="78.9" width="3" height="1.1" fill="#6e6e6e"/><rect x="929.5" y="70.5" width="5.5" height="9.5" fill="#6e6e6e"/>
<text x="937.25" y="77.7" font-size="9.05" fill="#1f1f1f" font-weight="normal" stroke="#1f1f1f" stroke-width="0.18" textLength="17.60" lengthAdjust="spacingAndGlyphs" >Split</text>
<rect x="964.1" y="70.5" width="8.8" height="9" fill="#6e6e6e"/><path d="M965,78 L967.5,75 L969.5,77 L970.8,75.8 L972.2,78 Z" fill="#f2f2f2"/>
<text x="975.69" y="77.7" font-size="8.86" fill="#1f1f1f" font-weight="normal" stroke="#1f1f1f" stroke-width="0.18" textLength="27.56" lengthAdjust="spacingAndGlyphs" >Design</text>
<defs><clipPath id="codeclip"><rect x="258" y="86" width="468" height="410"/></clipPath></defs>
<g clip-path="url(#codeclip)" font-family="Liberation Mono" font-size="13.75" xml:space="preserve">
<text x="263.20" y="98.00" fill="#080808" stroke="#080808" stroke-width="0.3">&lt;?</text>
<text x="279.70" y="98.00" fill="#0033b3" stroke="#0033b3" stroke-width="0.3">xml</text>
<text x="312.70" y="98.00" fill="#174ad4" stroke="#174ad4" stroke-width="0.3">version</text>
<text x="370.45" y="98.00" fill="#067d17" stroke="#067d17" stroke-width="0.3">="1.0"</text>
<text x="428.20" y="98.00" fill="#174ad4" stroke="#174ad4" stroke-width="0.3">encoding</text>
<text x="494.20" y="98.00" fill="#067d17" stroke="#067d17" stroke-width="0.3">="utf-8"</text>
<text x="560.20" y="98.00" fill="#080808" stroke="#080808" stroke-width="0.3">?&gt;</text>
<text x="263.20" y="119.76" fill="#080808" stroke="#080808" stroke-width="0.3">&lt;</text>
<text x="271.45" y="119.76" fill="#0033b3" stroke="#0033b3" stroke-width="0.3">FrameLayout</text>
<text x="370.45" y="119.76" fill="#174ad4" stroke="#174ad4" stroke-width="0.3">xmlns:</text>
<text x="419.95" y="119.76" fill="#871094" stroke="#871094" stroke-width="0.3">android</text>
<text x="477.70" y="119.76" fill="#067d17" stroke="#067d17" stroke-width="0.3">="http://schemas.android.com/a</text>
<text x="296.20" y="141.52" fill="#174ad4" stroke="#174ad4" stroke-width="0.3">xmlns:</text>
<text x="345.70" y="141.52" fill="#871094" stroke="#871094" stroke-width="0.3">tools</text>
<text x="386.95" y="141.52" fill="#067d17" stroke="#067d17" stroke-width="0.3">="http://schemas.android.com/tools"</text>
<text x="296.20" y="163.28" fill="#871094" stroke="#871094" stroke-width="0.3">android</text>
<text x="353.95" y="163.28" fill="#174ad4" stroke="#174ad4" stroke-width="0.3">:layout_width</text>
<text x="461.20" y="163.28" fill="#067d17" stroke="#067d17" stroke-width="0.3">="match_parent"</text>
<text x="296.20" y="185.04" fill="#871094" stroke="#871094" stroke-width="0.3">android</text>
<text x="353.95" y="185.04" fill="#174ad4" stroke="#174ad4" stroke-width="0.3">:layout_height</text>
<text x="469.45" y="185.04" fill="#067d17" stroke="#067d17" stroke-width="0.3">="match_parent"</text>
<text x="296.20" y="206.80" fill="#871094" stroke="#871094" stroke-width="0.3">tools</text>
<text x="337.45" y="206.80" fill="#174ad4" stroke="#174ad4" stroke-width="0.3">:context</text>
<text x="403.45" y="206.80" fill="#067d17" stroke="#067d17" stroke-width="0.3">=".Page3"</text>
<text x="296.20" y="228.56" fill="#871094" stroke="#871094" stroke-width="0.3">android</text>
<text x="353.95" y="228.56" fill="#174ad4" stroke="#174ad4" stroke-width="0.3">:background</text>
<text x="444.70" y="228.56" fill="#067d17" stroke="#067d17" stroke-width="0.3">="#0F9D58"</text>
<text x="296.20" y="250.32" fill="#080808" stroke="#080808" stroke-width="0.3">&gt;</text>
<text x="296.20" y="272.08" fill="#8c8c8c" stroke="#8c8c8c" stroke-width="0.3" font-style="italic">&lt;!--</text>
<text x="337.45" y="272.08" fill="#008dde" stroke="#008dde" stroke-width="0.3" font-style="italic">TODO: Update blank fragment layout</text>
<text x="626.20" y="272.08" fill="#8c8c8c" stroke="#8c8c8c" stroke-width="0.3" font-style="italic">--&gt;</text>
<text x="296.20" y="293.84" fill="#080808" stroke="#080808" stroke-width="0.3">&lt;</text>
<text x="304.45" y="293.84" fill="#0033b3" stroke="#0033b3" stroke-width="0.3">TextView</text>
<text x="329.20" y="315.60" fill="#871094" stroke="#871094" stroke-width="0.3">android</text>
<text x="386.95" y="315.60" fill="#174ad4" stroke="#174ad4" stroke-width="0.3">:layout_width</text>
<text x="494.20" y="315.60" fill="#067d17" stroke="#067d17" stroke-width="0.3">="match_parent"</text>
<text x="329.20" y="337.36" fill="#871094" stroke="#871094" stroke-width="0.3">android</text>
<text x="386.95" y="337.36" fill="#174ad4" stroke="#174ad4" stroke-width="0.3">:layout_height</text>
<text x="502.45" y="337.36" fill="#067d17" stroke="#067d17" stroke-width="0.3">="match_parent"</text>
<text x="329.20" y="359.12" fill="#871094" stroke="#871094" stroke-width="0.3">android</text>
<text x="386.95" y="359.12" fill="#174ad4" stroke="#174ad4" stroke-width="0.3">:gravity</text>
<text x="452.95" y="359.12" fill="#067d17" stroke="#067d17" stroke-width="0.3">="center"</text>
<text x="329.20" y="380.88" fill="#871094" stroke="#871094" stroke-width="0.3">android</text>
<text x="386.95" y="380.88" fill="#174ad4" stroke="#174ad4" stroke-width="0.3">:text</text>
<text x="428.20" y="380.88" fill="#067d17" stroke="#067d17" stroke-width="0.3">="Page 3"</text>
<text x="329.20" y="402.64" fill="#871094" stroke="#871094" stroke-width="0.3">android</text>
<text x="386.95" y="402.64" fill="#174ad4" stroke="#174ad4" stroke-width="0.3">:textColor</text>
<text x="469.45" y="402.64" fill="#067d17" stroke="#067d17" stroke-width="0.3">="@color/white"</text>
<text x="329.20" y="424.40" fill="#871094" stroke="#871094" stroke-width="0.3">android</text>
<text x="386.95" y="424.40" fill="#174ad4" stroke="#174ad4" stroke-width="0.3">:textSize</text>
<text x="461.20" y="424.40" fill="#067d17" stroke="#067d17" stroke-width="0.3">="60sp"</text>
<text x="329.20" y="446.16" fill="#871094" stroke="#871094" stroke-width="0.3">android</text>
<text x="386.95" y="446.16" fill="#174ad4" stroke="#174ad4" stroke-width="0.3">:textStyle</text>
<text x="469.45" y="446.16" fill="#067d17" stroke="#067d17" stroke-width="0.3">="bold"</text>
<text x="535.45" y="446.16" fill="#080808" stroke="#080808" stroke-width="0.3">/&gt;</text>
<text x="263.20" y="467.92" fill="#080808" stroke="#080808" stroke-width="0.3">&lt;/</text>
<text x="279.70" y="467.92" fill="#0033b3" stroke="#0033b3" stroke-width="0.3">FrameLayout</text>
<text x="370.45" y="467.92" fill="#080808" stroke="#080808" stroke-width="0.3">&gt;</text>
</g>
<g font-family="Liberation Mono" font-size="12.5" fill="#a6a6a6">
<text x="222.5" y="98.00" text-anchor="end">1</text>
<text x="222.5" y="119.76" text-anchor="end">2</text>
<text x="222.5" y="141.52" text-anchor="end">3</text>
<text x="222.5" y="163.28" text-anchor="end">4</text>
<text x="222.5" y="185.04" text-anchor="end">5</text>
<text x="222.5" y="206.80" text-anchor="end">6</text>
<text x="222.5" y="228.56" text-anchor="end">7</text>
<text x="222.5" y="250.32" text-anchor="end">8</text>
<text x="222.5" y="272.08" text-anchor="end">9</text>
<text x="222.5" y="293.84" text-anchor="end">10</text>
<text x="222.5" y="315.60" text-anchor="end">11</text>
<text x="222.5" y="337.36" text-anchor="end">12</text>
<text x="222.5" y="359.12" text-anchor="end">13</text>
<text x="222.5" y="380.88" text-anchor="end">14</text>
<text x="222.5" y="402.64" text-anchor="end">15</text>
<text x="222.5" y="424.40" text-anchor="end">16</text>
<text x="222.5" y="446.16" text-anchor="end">17</text>
<text x="222.5" y="467.92" text-anchor="end">18</text>
</g>
<circle cx="236.2" cy="114.6" r="7.8" fill="#8fd4ee"/><path d="M238.4,112.6 A2.7,2.7 0 1 0 238.4,116.6" stroke="#4a5868" stroke-width="1.3" fill="none"/>
<path d="M252.89999999999998,109.5 h9 v7.5 l-4.5,4 l-4.5,-4 Z" fill="#ffffff" stroke="#cfcfcf" stroke-width="0.9"/><path d="M255.39999999999998,114.0 h4" stroke="#b0b0b0" stroke-width="0.9"/>
<path d="M252.89999999999998,284.9 h9 v7.5 l-4.5,4 l-4.5,-4 Z" fill="#ffffff" stroke="#cfcfcf" stroke-width="0.9"/><path d="M255.39999999999998,289.4 h4" stroke="#b0b0b0" stroke-width="0.9"/>
<path d="M252.89999999999998,446.5 h9 v-7.5 l-4.5,-4 l-4.5,4 Z" fill="#ffffff" stroke="#cfcfcf" stroke-width="0.9"/><path d="M255.39999999999998,442 h4" stroke="#b0b0b0" stroke-width="0.9"/>
<path d="M252.89999999999998,468.5 h9 v-7.5 l-4.5,-4 l-4.5,4 Z" fill="#ffffff" stroke="#cfcfcf" stroke-width="0.9"/><path d="M255.39999999999998,464 h4" stroke="#b0b0b0" stroke-width="0.9"/>
<circle cx="273.6" cy="351" r="3.9" fill="#f0a30a"/><rect x="271.6" y="354.5" width="4" height="2.5" fill="#9a9a9a"/>
<rect x="715.5" y="87.5" width="7.5" height="7.3" fill="#f2c94c"/><path d="M716.5,89 h5.5 M716.5,91 h5.5 M716.5,93 h5.5" stroke="#e0a820" stroke-width="0.6" stroke-dasharray="1,1"/>
<path d="M755,90.5 L761.2,94 L755,97.5 L748.8,94 Z" fill="#3a8ee6"/><path d="M748.8,96.5 L755,100 L761.2,96.5" stroke="#3a8ee6" stroke-width="1.2" fill="none"/><path d="M758.5,101 L762,101 L760.25,103 Z" fill="#3a3a3a"/>
<circle cx="779.6" cy="96.3" r="5.6" stroke="#6e6e6e" stroke-width="1" fill="none"/><path d="M775.5,92.5 L783.5,100.3" stroke="#6e6e6e" stroke-width="1"/><path d="M782,101 L785.5,101 L783.75,103 Z" fill="#3a3a3a"/>
<rect x="803.5" y="91" width="6" height="10.5" rx="1" fill="none" stroke="#5e5e5e" stroke-width="1.1"/>
<text x="813.87" y="100.1" font-size="9.06" fill="#1f1f1f" font-weight="normal" stroke="#1f1f1f" stroke-width="0.18" textLength="19.65" lengthAdjust="spacingAndGlyphs" >Pixel</text>
<path d="M836.5,94.8 L839.2,97.5 L842,94.8" stroke="#8a8a8a" stroke-width="1" fill="none"/>
<path d="M852.20,99.50 A4.40,4.68 0 0 1 861.00,99.50 Z" fill="#3ddc84"/>
<line x1="854.14" y1="93.50" x2="855.10" y2="95.60" stroke="#3ddc84" stroke-width="1"/>
<line x1="859.06" y1="93.50" x2="858.10" y2="95.60" stroke="#3ddc84" stroke-width="1"/>
<text x="863.33" y="100.1" font-size="9.41" fill="#1f1f1f" font-weight="normal" stroke="#1f1f1f" stroke-width="0.18" textLength="10.47" lengthAdjust="spacingAndGlyphs" >29</text>
<path d="M876.5,94.8 L879.3,97.5 L882.2,94.8" stroke="#8a8a8a" stroke-width="1" fill="none"/>
<path d="M959.5,93.5 l2.5,2.5 l-2.5,2.5 M962.5,93.5 l2.5,2.5 l-2.5,2.5" stroke="#8a8a8a" stroke-width="0.9" fill="none"/>
<path d="M979.7,91.5 L985,100.7 L974.5,100.7 Z" fill="#f4a623"/><rect x="979.1" y="94.5" width="1.2" height="3.3" fill="#fff"/><rect x="979.1" y="98.6" width="1.2" height="1.2" fill="#fff"/>
<path d="M749.5,119 q6,-7 12,0 q-6,7 -12,0 Z" fill="none" stroke="#6e6e6e" stroke-width="1.2"/><circle cx="755.5" cy="119" r="1.8" fill="#6e6e6e"/><path d="M758.5,123.5 L762,123.5 L760.25,125.5 Z" fill="#3a3a3a"/>
<path d="M774.2,113.5 v11 M768.7,119 h3 M776.7,119 h3" stroke="#6e6e6e" stroke-width="1.1"/><path d="M771,117 l2,2 l-2,2 Z M777.5,117 l-2,2 l2,2 Z" fill="#6e6e6e"/>
<path d="M788.6,119 h11 M794.1,113.5 v3 M794.1,121.5 v3" stroke="#6e6e6e" stroke-width="1.1"/><path d="M792,115.8 l2.1,2 l2.1,-2 Z M792,122.2 l2.1,-2 l2.1,2 Z" fill="#6e6e6e"/>
<circle cx="979.6" cy="117.5" r="4.6" fill="#3a8ee6"/><text x="977.6" y="120.6" font-size="7.5" font-weight="bold" fill="#fff">?</text>
<text x="813.59" y="316.8" font-size="28.75" fill="#ffffff" font-weight="bold" stroke="#ffffff" stroke-width="0.18" textLength="92.69" lengthAdjust="spacingAndGlyphs" >Page 3</text>
<path d="M760,486 H962" stroke="#4a90d9" stroke-width="1" stroke-dasharray="2,1.5"/>
<rect x="958" y="374" width="19" height="21.5" rx="3" fill="#ffffff" stroke="#dcdcdc" stroke-width="0.8"/>
<path d="M963.5,388 v-6 q0,-1 1,-1 v4 v-6 q0,-1 1,-1 q1,0 1,1 v5 v-5.5 q0,-1 1,-1 q1,0 1,1 v5.5 v-4 q0,-1 1,-1 q1,0 1,1 v7 q0,3.5 -3.5,3.5 h-1 q-2,0 -3.5,-2.5 Z" fill="#6e6e6e"/>
<rect x="958" y="399.7" width="19" height="79" rx="3" fill="#ffffff" stroke="#dcdcdc" stroke-width="0.8"/>
<path d="M963.5,409.5 h8 M967.5,405.5 v8" stroke="#555" stroke-width="1.2"/><path d="M963.5,429.5 h8" stroke="#555" stroke-width="1.2"/>
<text x="962.5" y="452.5" font-size="8.3" font-weight="bold" fill="#555">1:1</text>
<rect x="963" y="463" width="9.5" height="8.5" fill="none" stroke="#6e6e6e" stroke-width="1"/><path d="M965,465 l2.5,2.5 M970.5,469.5 l-2.5,-2.5" stroke="#6e6e6e" stroke-width="0.9"/>
<path d="M975,494.5 L981,488.5" stroke="#8a8a8a" stroke-width="0.9"/>
<text transform="translate(12.0,85.55) rotate(-90)" x="0" y="0" font-size="8.6" fill="#2b2b2b" stroke="#2b2b2b" stroke-width="0.15" textLength="33.38" lengthAdjust="spacingAndGlyphs">1: Project</text>
<path d="M5,97 V90.5 H8 L9,91.5 H13 V97 Z" fill="#5e5e5e"/>
<text transform="translate(12.0,187.56) rotate(-90)" x="0" y="0" font-size="8.6" fill="#2b2b2b" stroke="#2b2b2b" stroke-width="0.15" textLength="70.07" lengthAdjust="spacingAndGlyphs">Resource Manager</text>
<path d="M9,191.5 L11,194.5 L7,194.5 Z" fill="#6e6e6e"/><rect x="6" y="196" width="3" height="3" fill="#6e6e6e"/><circle cx="11.5" cy="197.5" r="1.6" fill="#6e6e6e"/>
<text transform="translate(12.0,335.92) rotate(-90)" x="0" y="0" font-size="8.6" fill="#2b2b2b" stroke="#2b2b2b" stroke-width="0.15" textLength="43.33" lengthAdjust="spacingAndGlyphs">7: Structure</text>
<rect x="6" y="341" width="3" height="2.5" fill="#6e6e6e"/><rect x="6" y="344.5" width="3" height="2.5" fill="#6e6e6e"/><rect x="10" y="344.5" width="3" height="2.5" fill="#6e6e6e"/>
<text transform="translate(12.0,408.40) rotate(-90)" x="0" y="0" font-size="8.6" fill="#2b2b2b" stroke="#2b2b2b" stroke-width="0.15" textLength="41.92" lengthAdjust="spacingAndGlyphs">2: Favorites</text>
<path d="M9.5,411.5 L11,415 L14.5,415.3 L11.8,417.6 L12.7,421 L9.5,419.2 L6.3,421 L7.2,417.6 L4.5,415.3 L8,415 Z" fill="#5e5e5e"/>
<text transform="translate(12.0,491.43) rotate(-90)" x="0" y="0" font-size="8.6" fill="#2b2b2b" stroke="#2b2b2b" stroke-width="0.15" textLength="52.15" lengthAdjust="spacingAndGlyphs">Build Variants</text>
<path d="M4.80,502.00 A4.50,4.68 0 0 1 13.80,502.00 Z" fill="#6e6e6e"/>
<line x1="6.78" y1="496.00" x2="7.77" y2="498.10" stroke="#6e6e6e" stroke-width="1"/>
<line x1="11.82" y1="496.00" x2="10.83" y2="498.10" stroke="#6e6e6e" stroke-width="1"/>
<text transform="translate(739.4,120.60) rotate(-90)" x="0" y="0" font-size="8.6" fill="#2b2b2b" stroke="#2b2b2b" stroke-width="0.15" textLength="27.07" lengthAdjust="spacingAndGlyphs">Palette</text>
<rect x="733" y="128.5" width="7" height="3.5" fill="#6e6e6e"/><path d="M733,127.5 l2,-3 M736,127.5 l2,-3" stroke="#6e6e6e" stroke-width="1"/>
<text transform="translate(739.4,473.12) rotate(-90)" x="0" y="0" font-size="8.6" fill="#2b2b2b" stroke="#2b2b2b" stroke-width="0.15" textLength="62.73" lengthAdjust="spacingAndGlyphs">Component Tree</text>
<circle cx="736.5" cy="481" r="3.8" fill="none" stroke="#6e6e6e" stroke-width="1.1"/><path d="M734,479 q2,1 1.5,3 q2,-0.5 3,1.5" stroke="#6e6e6e" stroke-width="0.9" fill="none"/>
<text transform="translate(996.3,106.40) rotate(90)" x="0" y="0" font-size="8.6" fill="#2b2b2b" stroke="#2b2b2b" stroke-width="0.15" textLength="35.89" lengthAdjust="spacingAndGlyphs">Attributes</text>
<path d="M996.5,90 v8 M999.5,90 v8 M1002.5,90 v8" stroke="#6e6e6e" stroke-width="0.9"/><path d="M995,92 h3 M998,95.5 h3 M1001,93 h3" stroke="#6e6e6e" stroke-width="1.1"/>
<text transform="translate(1012.3,63.30) rotate(90)" x="0" y="0" font-size="8.6" fill="#2b2b2b" stroke="#2b2b2b" stroke-width="0.15" textLength="27.07" lengthAdjust="spacingAndGlyphs">Gradle</text>
<path d="M1011,60 q0,-6 5,-6.5 q2.5,-0.3 3.7,-2 l1.3,0.8 q-0.8,1.7 -2,2.5 v5.2 h-1.5 v-2.5 h-3.8 v2.5 h-1.5 Z" fill="#6e6e6e"/>
<text transform="translate(1012.3,117.30) rotate(90)" x="0" y="0" font-size="8.6" fill="#2b2b2b" stroke="#2b2b2b" stroke-width="0.15" textLength="66.29" lengthAdjust="spacingAndGlyphs">Layout Validation</text>
<rect x="1012" y="104.5" width="6" height="8" fill="none" stroke="#6e6e6e" stroke-width="1"/><rect x="1015.5" y="109" width="5" height="5" fill="#f2f2f2" stroke="#6e6e6e" stroke-width="1"/>
<text transform="translate(1012.3,363.91) rotate(90)" x="0" y="0" font-size="8.6" fill="#2b2b2b" stroke="#2b2b2b" stroke-width="0.15" textLength="34.59" lengthAdjust="spacingAndGlyphs">Emulator</text>
<rect x="1012" y="354" width="5.5" height="6.5" fill="none" stroke="#6e6e6e" stroke-width="1"/><rect x="1016.5" y="353.5" width="3" height="3" fill="#b07ad6"/>
<text transform="translate(1012.3,428.05) rotate(90)" x="0" y="0" font-size="8.6" fill="#2b2b2b" stroke="#2b2b2b" stroke-width="0.15" textLength="72.84" lengthAdjust="spacingAndGlyphs">Device File Explorer</text>
<rect x="1012.5" y="416" width="6" height="9.5" rx="1" fill="none" stroke="#6e6e6e" stroke-width="1.1"/>
<text x="264.04" y="508.8" font-size="8.84" fill="#7a7a7a" font-weight="normal" stroke="#7a7a7a" stroke-width="0.18" textLength="52.05" lengthAdjust="spacingAndGlyphs" >FrameLayout</text>
<path d="M325,502.5 l2.8,2.8 l-2.8,2.8" stroke="#9a9a9a" stroke-width="0.9" fill="none"/>
<text x="334.57" y="508.8" font-size="8.82" fill="#7a7a7a" font-weight="normal" stroke="#7a7a7a" stroke-width="0.18" textLength="35.12" lengthAdjust="spacingAndGlyphs" >TextView</text>
<path d="M24.5,519.5 h1.5 M24.5,522 h1.5 M24.5,524.5 h1.5 M27.5,519.5 h4.7 M27.5,522 h4.7 M27.5,524.5 h4.7" stroke="#5e5e5e" stroke-width="1.1"/>
<text x="35.53" y="525.6" font-size="8.54" fill="#1f1f1f" font-weight="normal" stroke="#1f1f1f" stroke-width="0.18" textLength="24.50" lengthAdjust="spacingAndGlyphs" >TODO</text>
<rect x="75.2" y="518" width="8.8" height="8.5" fill="#5e5e5e"/><path d="M77,520.5 l2,1.7 l-2,1.7" stroke="#f2f2f2" stroke-width="0.9" fill="none"/>
<text x="87.32" y="525.6" font-size="8.81" fill="#1f1f1f" font-weight="normal" stroke="#1f1f1f" stroke-width="0.18" textLength="33.29" lengthAdjust="spacingAndGlyphs" >Terminal</text>
<path d="M136,520.8 L139.5,518.3 L141.3,520.3 L140.2,521.5 L145.5,526.5 L144.3,527.3 L139,522.5 L137.8,523.5 Z" fill="#5e5e5e"/>
<text x="147.66" y="525.6" font-size="9.23" fill="#1f1f1f" font-weight="normal" stroke="#1f1f1f" stroke-width="0.18" textLength="20.53" lengthAdjust="spacingAndGlyphs" >Build</text>
<path d="M184.1,519 h8 M184.1,521.5 h5 M184.1,524 h8 M184.1,526.5 h5" stroke="#5e5e5e" stroke-width="1.1"/>
<text x="195.48" y="525.6" font-size="8.35" fill="#1f1f1f" font-weight="normal" stroke="#1f1f1f" stroke-width="0.18" textLength="34.35" lengthAdjust="spacingAndGlyphs" >6: Logcat</text>
<path d="M245.5,526 A4.5,4.5 0 0 1 254.5,526" stroke="#5e5e5e" stroke-width="1.3" fill="none"/><path d="M249.5,526 L252,521.5" stroke="#5e5e5e" stroke-width="1.1"/>
<text x="257.19" y="525.6" font-size="8.93" fill="#1f1f1f" font-weight="normal" stroke="#1f1f1f" stroke-width="0.18" textLength="28.27" lengthAdjust="spacingAndGlyphs" >Profiler</text>
<ellipse cx="307.7" cy="519.5" rx="4" ry="1.5" fill="#6e6e6e"/><rect x="303.7" y="519.5" width="8" height="7" fill="#6e6e6e"/><path d="M303.7,522 q4,1.5 8,0 M303.7,524.5 q4,1.5 8,0" stroke="#f2f2f2" stroke-width="0.7" fill="none"/>
<text x="315.21" y="525.6" font-size="8.64" fill="#1f1f1f" font-weight="normal" stroke="#1f1f1f" stroke-width="0.18" textLength="74.89" lengthAdjust="spacingAndGlyphs" >Database Inspector</text>
<path d="M408.3,518.3 L414.5,522.3 L408.3,526.3 Z" fill="#6e6e6e"/><circle cx="413.5" cy="526.2" r="1.6" fill="#3ec14c"/>
<text x="419.83" y="525.6" font-size="8.64" fill="#1f1f1f" font-weight="normal" stroke="#1f1f1f" stroke-width="0.18" textLength="25.44" lengthAdjust="spacingAndGlyphs" >4: Run</text>
<circle cx="860" cy="522.5" r="4.7" fill="#5a9e61"/><text x="858.3" y="525.5" font-size="7.2" font-weight="bold" fill="#fff">1</text>
<text x="867.73" y="525.6" font-size="8.39" fill="#1f1f1f" font-weight="normal" stroke="#1f1f1f" stroke-width="0.18" textLength="37.80" lengthAdjust="spacingAndGlyphs" >Event Log</text>
<rect x="922.7" y="518" width="7" height="6" fill="none" stroke="#8a8a8a" stroke-width="0.9"/><circle cx="929" cy="524" r="2.2" fill="#f2f2f2" stroke="#6e6e6e" stroke-width="0.9"/><path d="M930.5,525.5 l1.8,1.8" stroke="#6e6e6e" stroke-width="1"/>
<text x="934.91" y="525.6" font-size="8.68" fill="#1f1f1f" font-weight="normal" stroke="#1f1f1f" stroke-width="0.18" textLength="64.21" lengthAdjust="spacingAndGlyphs" >Layout Inspector</text>
<rect x="4.5" y="533.5" width="6.5" height="6.5" fill="#f2f2f2" stroke="#9a9a9a" stroke-width="0.9"/><rect x="6.8" y="535.3" width="6.5" height="6.3" fill="#f2f2f2" stroke="#8a8a8a" stroke-width="0.9"/>
<text x="20.06" y="541.25" font-size="8.73" fill="#1f1f1f" font-weight="normal" stroke="#1f1f1f" stroke-width="0.18" textLength="188.67" lengthAdjust="spacingAndGlyphs" >Success: Operation succeeded (37 minutes ago)</text>
<text x="860.10" y="541.25" font-size="8.52" fill="#2b2b2b" font-weight="normal" stroke="#2b2b2b" stroke-width="0.18" textLength="16.59" lengthAdjust="spacingAndGlyphs" >13:8</text>
<text x="885.41" y="541.25" font-size="8.20" fill="#2b2b2b" font-weight="normal" stroke="#2b2b2b" stroke-width="0.18" textLength="20.52" lengthAdjust="spacingAndGlyphs" >CRLF</text>
<text x="913.91" y="541.25" font-size="8.60" fill="#9a9a9a" font-weight="normal" stroke="#9a9a9a" stroke-width="0.18" textLength="24.36" lengthAdjust="spacingAndGlyphs" >UTF-8</text>
<text x="946.73" y="541.25" font-size="8.33" fill="#2b2b2b" font-weight="normal" stroke="#2b2b2b" stroke-width="0.18" textLength="33.33" lengthAdjust="spacingAndGlyphs" >4 spaces</text>
<rect x="988.5" y="537" width="7.5" height="5" fill="#6e6e6e"/><path d="M990,537 v-2 a2,2 0 0 1 4,0" stroke="#6e6e6e" stroke-width="1.1" fill="none"/>
<path d="M1006.5,537 h9 M1008,537 l1,-3 h4 l1,3" stroke="#6e6e6e" stroke-width="1.1" fill="none"/><circle cx="1011" cy="539.5" r="2.5" fill="#8a8a8a"/><path d="M1007.5,543 q3.5,-3 7,0" fill="#8a8a8a"/>
<path d="M12,556.5 l5.2,-0.8 v5 h-5.2 Z M18.2,555.6 l6,-0.9 v6 h-6 Z M12,561.8 h5.2 v5 l-5.2,-0.8 Z M18.2,561.8 h6 v6 l-6,-0.9 Z" fill="#ffffff"/>
<circle cx="52.5" cy="559.5" r="4.2" fill="none" stroke="#3a3a3a" stroke-width="1.2"/><path d="M49.5,562.5 L45,567" stroke="#3a3a3a" stroke-width="1.4"/>
<text x="66.03" y="565.75" font-size="10.86" fill="#3d3d3d" font-weight="normal" stroke="#3d3d3d" stroke-width="0.18" textLength="95.95" lengthAdjust="spacingAndGlyphs" >Type here to search</text>
<circle cx="311.7" cy="561.2" r="5.3" fill="none" stroke="#ffffff" stroke-width="1.3"/>
<path d="M342,556 h9 M342,566.5 h9" stroke="#fff" stroke-width="1.1"/><rect x="343" y="558" width="7" height="6.5" fill="none" stroke="#fff" stroke-width="1.1"/><rect x="352.8" y="557" width="1.4" height="1.4" fill="#fff"/><rect x="352.8" y="559.5" width="1.2" height="7" fill="#fff"/>
<path d="M378,554.5 h6 l1.5,1.5 h8.5 v11.5 h-16 Z" fill="#f8c33c"/><rect x="378" y="558" width="16" height="9.5" fill="#fbd76b"/><path d="M381,567.5 v-4.5 h10 v4.5" stroke="#2f8ee0" stroke-width="1.8" fill="none"/>
<path d="M428.5,552.5 L432,554.2 V567 L428.5,569 L418,561.5 L415,564 L413.5,563.2 V556.8 L415,556 L418,558.5 Z" fill="#2489ca"/><path d="M428.5,556.5 L422,561 L428.5,565.5 Z" fill="#101010"/><path d="M428.5,552.5 L432,554.2 V567 L428.5,569 Z" fill="#1f9cf0"/>
<defs><linearGradient id="ffg" x1="0" y1="0" x2="0" y2="1"><stop offset="0" stop-color="#ffb93a"/><stop offset="0.5" stop-color="#ff5a3c"/><stop offset="1" stop-color="#e6246e"/></linearGradient><linearGradient id="drg" x1="0" y1="0" x2="0" y2="1"><stop offset="0" stop-color="#ffb13b"/><stop offset="0.35" stop-color="#e2508f"/><stop offset="0.65" stop-color="#8f5fd8"/><stop offset="1" stop-color="#2fa0f0"/></linearGradient></defs>
<circle cx="459.5" cy="561.5" r="8.4" fill="url(#ffg)"/><path d="M453,553.5 q4,-3 8.5,-1.5 q-2.5,1 -2,3 q5,0 7.5,5" fill="#ffcf3a"/><circle cx="458.8" cy="562.2" r="4.3" fill="#7a4ad6"/><circle cx="458" cy="562.8" r="2.3" fill="#4a5ad8"/>
<circle cx="496.2" cy="561" r="8.4" fill="#ffffff"/><path d="M491.8,566.5 V557.8 L496.2,561.5 L500.6,557.8 V566.5" stroke="#1e6ed8" stroke-width="2.4" fill="none"/><path d="M492.5,556.5 a3.7,3 0 0 1 7.4,0 Z" fill="#3ddc84"/>
<circle cx="532.8" cy="561" r="8.4" fill="#ffffff"/><path d="M527.5,559 L534,553.5 L539,560 L532.5,565.5 Z" fill="#3ec14c"/><path d="M530,566 l3,-3" stroke="#3a8ee6" stroke-width="1.5"/>
<path d="M570,551.8 q-7,9 -6.5,12.5 a6.5,6.5 0 0 0 13,0 q0.5,-3.5 -6.5,-12.5 Z" fill="url(#drg)"/>
<path d="M855.5,563.5 L860.3,558.5 L865,563.5" stroke="#fff" stroke-width="1.1" fill="none"/>
<rect x="872.5" y="559.2" width="10" height="5" fill="none" stroke="#fff" stroke-width="0.9"/><rect x="873.8" y="560.4" width="2.7" height="2.6" fill="#fff"/><rect x="882.8" y="560.8" width="1" height="2" fill="#fff"/>
<path d="M889.5,559.2 h2.2 l3.3,-3 v11 l-3.3,-3 h-2.2 Z" fill="none" stroke="#fff" stroke-width="0.9"/><path d="M896.5,559 q1.5,2.7 0,5.4 M898.6,557.5 q2.5,4.2 0,8.4 M900.7,556 q3.5,5.7 0,11.4" stroke="#fff" stroke-width="0.9" fill="none"/>
<text x="908.82" y="564" font-size="8.46" fill="#ffffff" font-weight="normal" stroke="#ffffff" stroke-width="0.18" textLength="18.33" lengthAdjust="spacingAndGlyphs" >ENG</text>
<text x="947.64" y="557.3" font-size="8.20" fill="#ffffff" font-weight="normal" stroke="#ffffff" stroke-width="0.18" textLength="19.89" lengthAdjust="spacingAndGlyphs" >14:03</text>
<text x="935.95" y="571.2" font-size="8.81" fill="#ffffff" font-weight="normal" stroke="#ffffff" stroke-width="0.18" textLength="44.41" lengthAdjust="spacingAndGlyphs" >08-11-2020</text>
<path d="M993,555 h12.5 v9.5 h-9 l-3.5,2.5 Z" fill="#ffffff"/><path d="M995,558 h8 M995,560.5 h8" stroke="#101010" stroke-width="0.9"/>
<circle cx="1004.6" cy="566" r="6" fill="#101010" stroke="#8a8a8a" stroke-width="0.9"/>
<text x="999.52" y="569.5" font-size="9.24" fill="#ffffff" font-weight="bold" stroke="#ffffff" stroke-width="0.18" textLength="10.27" lengthAdjust="spacingAndGlyphs" >20</text>
</svg>
</body></html>
